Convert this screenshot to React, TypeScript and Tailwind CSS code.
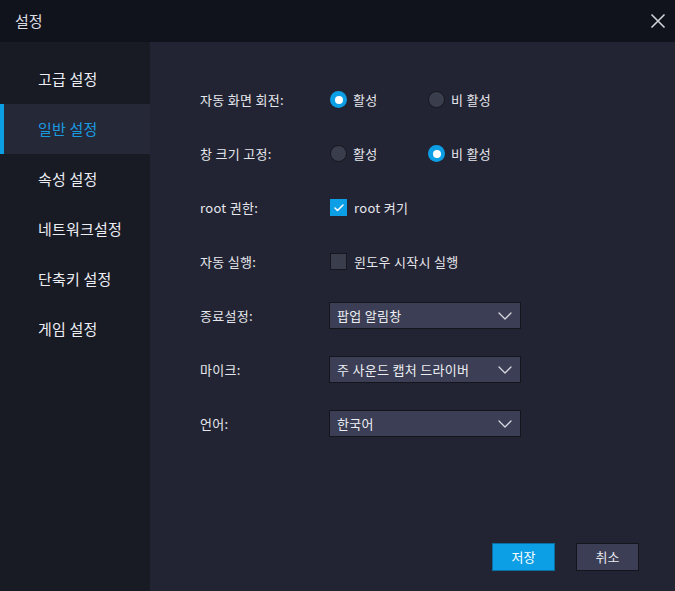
import { Check, ChevronDown } from "lucide-react"

const font = { fontFamily: '"Noto Sans CJK KR", "Noto Sans", sans-serif' }

const menu = ["고급 설정", "일반 설정", "속성 설정", "네트워크설정", "단축키 설정", "게임 설정"]

function Radio({ on, label }: { on: boolean; label: string }) {
  return (
    <div className="flex items-center gap-[6px]">
      {on ? (
        <span className="w-[17px] h-[17px] rounded-full bg-[#0d9fe6] flex items-center justify-center">
          <span className="w-[8px] h-[8px] rounded-full bg-white" />
        </span>
      ) : (
        <span className="w-[17px] h-[17px] rounded-full bg-[#3a3d4c] border border-[#15161e]" />
      )}
      <span className="text-[13px] tracking-[0.3px] text-[#e6e7ec]">{label}</span>
    </div>
  )
}

function Box({ on, label }: { on: boolean; label: string }) {
  return (
    <div className="flex items-center gap-[7px]">
      {on ? (
        <span className="w-[17px] h-[17px] bg-[#0d9fe6] flex items-center justify-center">
          <Check size={12} strokeWidth={3} color="#fff" />
        </span>
      ) : (
        <span className="w-[17px] h-[17px] bg-[#3a3d4c] border border-[#15161e]" />
      )}
      <span className="text-[13px] tracking-[0.3px] text-[#e6e7ec]">{label}</span>
    </div>
  )
}

function Select({ value }: { value: string }) {
  return (
    <div className="w-[192px] h-[27px] -ml-[1px] bg-[#3b3e54] border border-[#14151d] flex items-center justify-between pl-[7px] pr-[3px]">
      <span className="text-[13px] tracking-[0.3px] text-[#eceef3]">{value}</span>
      <ChevronDown size={24} strokeWidth={1.3} color="#d7d9e0" />
    </div>
  )
}

function Row({ label, children }: { label: string; children: React.ReactNode }) {
  return (
    <div className="flex items-center h-[27px]">
      <span className="w-[130px] text-[13px] tracking-[0.3px] text-[#e6e7ec]">{label}</span>
      {children}
    </div>
  )
}

export default function App() {
  return (
    <div style={font} className="w-[675px] h-[591px] bg-[#11131c] flex flex-col overflow-hidden">
      <div className="h-[42px] flex items-center justify-between pl-[15px] pr-[8px] shrink-0">
        <span className="text-[15px] text-[#dcdde2]">설정</span>
        <svg width="16" height="16" viewBox="0 0 16 16" className="mr-[1px]">
          <path d="M1.5 1.5 L14.5 14.5 M14.5 1.5 L1.5 14.5" stroke="#d0d2d8" strokeWidth="1.6" />
        </svg>
      </div>
      <div className="flex flex-1">
        <div className="w-[150px] bg-[#181a24] pt-[12px]">
          {menu.map((m, i) => (
            <div
              key={m}
              className={
                i === 1
                  ? "h-[50px] flex items-center pl-[34px] bg-[#252837] border-l-[4px] border-[#0d9fe6] text-[#1a9be0]"
                  : "h-[50px] flex items-center pl-[38px] text-[#eceef3]"
              }
            >
              <span className="text-[15px] tracking-[0.2px]">{m}</span>
            </div>
          ))}
        </div>
        <div className="flex-1 bg-[#222433] pl-[50px] pt-[44px] flex flex-col">
          <div className="flex flex-col gap-[27px]">
            <Row label="자동 화면 회전:">
              <div className="w-[98px]">
                <Radio on label="활성" />
              </div>
              <Radio on={false} label="비 활성" />
            </Row>
            <Row label="창 크기 고정:">
              <div className="w-[98px]">
                <Radio on={false} label="활성" />
              </div>
              <Radio on label="비 활성" />
            </Row>
            <Row label="root 권한:">
              <Box on label="root 켜기" />
            </Row>
            <Row label="자동 실행:">
              <Box on={false} label="윈도우 시작시 실행" />
            </Row>
            <Row label="종료설정:">
              <Select value="팝업 알림창" />
            </Row>
            <Row label="마이크:">
              <Select value="주 사운드 캡처 드라이버" />
            </Row>
            <Row label="언어:">
              <Select value="한국어" />
            </Row>
          </div>
          <div className="mt-auto mb-[20px] mr-[36px] flex justify-end gap-[21px]">
            <button className="w-[63px] h-[28px] bg-[#0d9fe6] border border-[#0b6fa3] text-[13px] text-white">저장</button>
            <button className="w-[63px] h-[28px] bg-[#3b3e54] border border-[#14151d] text-[13px] text-[#e6e7ec]">취소</button>
          </div>
        </div>
      </div>
    </div>
  )
}
